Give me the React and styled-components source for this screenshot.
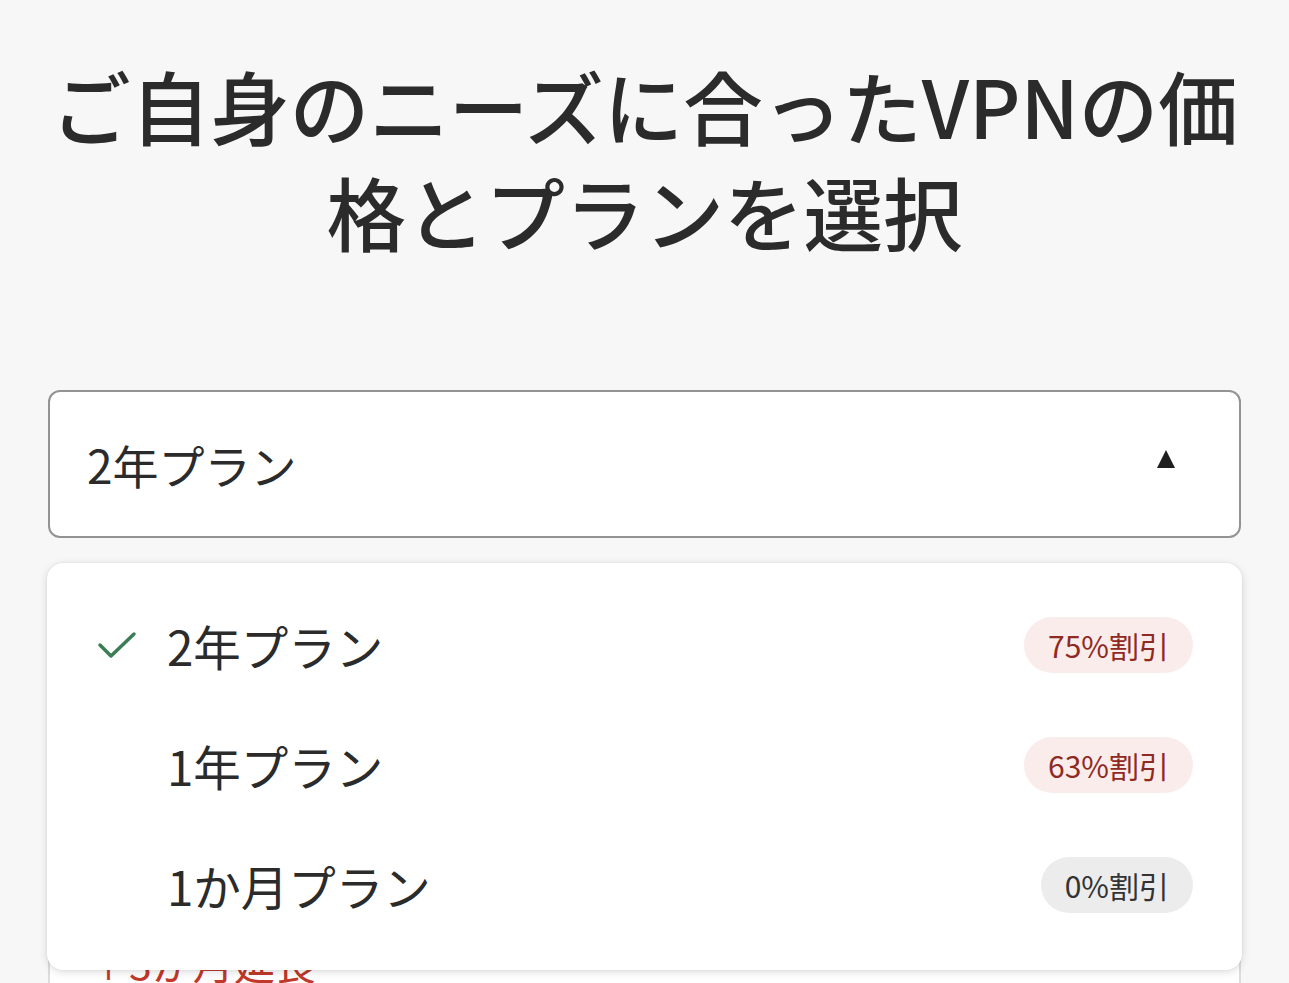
import React from "react";
import styled, { createGlobalStyle } from "styled-components";

const Global = createGlobalStyle`
  html, body { margin: 0; padding: 0; background: #f7f7f7; }
  body { font-family: "Noto Sans CJK JP", "Noto Sans", sans-serif; color: #2b2b2b; }
  * { box-sizing: border-box; }
`;

const Page = styled.div`
  padding: 52px 48px 0 48px;
  overflow: hidden;
  height: 983px;
`;

const Title = styled.h1`
  margin: 0;
  text-align: center;
  font-size: 79.5px;
  line-height: 106px;
  font-weight: 500;
  color: #2b2b2b;
  letter-spacing: 0;
`;

const SelectWrap = styled.div`
  position: relative;
  margin-top: 126px;
`;

const SelectBox = styled.div`
  height: 148px;
  background: #fff;
  border: 2px solid #939393;
  border-radius: 12px;
  display: flex;
  align-items: center;
  justify-content: space-between;
  padding: 0 64px 0 37px;
  font-size: 46px;
  color: #2b2b2b;
`;

const Caret = styled.svg`
  width: 18px;
  height: 18px;
  margin-top: -10px;
`;

const Menu = styled.ul`
  position: absolute;
  top: 173px;
  left: -1px;
  right: -1px;
  margin: 0;
  list-style: none;
  padding: 22px 49px 25px 50px;
  background: #fff;
  border-radius: 16px;
  box-shadow: 0 2px 8px rgba(0, 0, 0, 0.14), 0 0 2px rgba(0, 0, 0, 0.08);
  z-index: 2;
`;

const Item = styled.li`
  height: 120px;
  display: flex;
  align-items: center;
`;

const CheckSlot = styled.span`
  width: 40px;
  margin-right: 30px;
  display: flex;
  align-items: center;
`;

const Label = styled.span`
  flex: 1;
  font-size: 47.5px;
  color: #2b2b2b;
`;

const Badge = styled.span`
  height: 56px;
  padding: 0 24px;
  border-radius: 28px;
  display: inline-flex;
  align-items: center;
  font-size: 30px;
  background: ${(p) => (p.$tone === "red" ? "#f9eceb" : "#ececec")};
  color: ${(p) => (p.$tone === "red" ? "#8f2a22" : "#333")};
`;

const Card = styled.div`
  margin-top: 30px;
  background: #fff;
  border: 2px solid #dcdcdc;
  border-radius: 16px;
  padding: 362px 38px 40px;
`;

const Extension = styled.div`
  font-size: 41px;
  line-height: 60px;
  color: #c0392b;
`;

const plans = [
  { name: "2年プラン", off: "75%割引", tone: "red", checked: true },
  { name: "1年プラン", off: "63%割引", tone: "red" },
  { name: "1か月プラン", off: "0%割引", tone: "gray" },
];

export default function App() {
  return (
    <>
      <Global />
      <Page>
        <Title>
          ご自身のニーズに合ったVPNの価
          <br />
          格とプランを選択
        </Title>
        <SelectWrap>
          <SelectBox>
            <span>2年プラン</span>
            <Caret viewBox="0 0 18 18">
              <path d="M9 0 L18 18 L0 18 Z" fill="#1f1f1f" />
            </Caret>
          </SelectBox>
          <Menu>
            {plans.map((p) => (
              <Item key={p.name}>
                <CheckSlot>
                  {p.checked && (
                    <svg width="40" height="28" viewBox="0 0 40 28">
                      <path
                        d="M3 14 L14 25 L37 3"
                        fill="none"
                        stroke="#3b7d55"
                        strokeWidth="3.5"
                        strokeLinecap="round"
                        strokeLinejoin="round"
                      />
                    </svg>
                  )}
                </CheckSlot>
                <Label>{p.name}</Label>
                <Badge $tone={p.tone}>{p.off}</Badge>
              </Item>
            ))}
          </Menu>
          <Card>
            <Extension>＋3か月延長</Extension>
          </Card>
        </SelectWrap>
      </Page>
    </>
  );
}
